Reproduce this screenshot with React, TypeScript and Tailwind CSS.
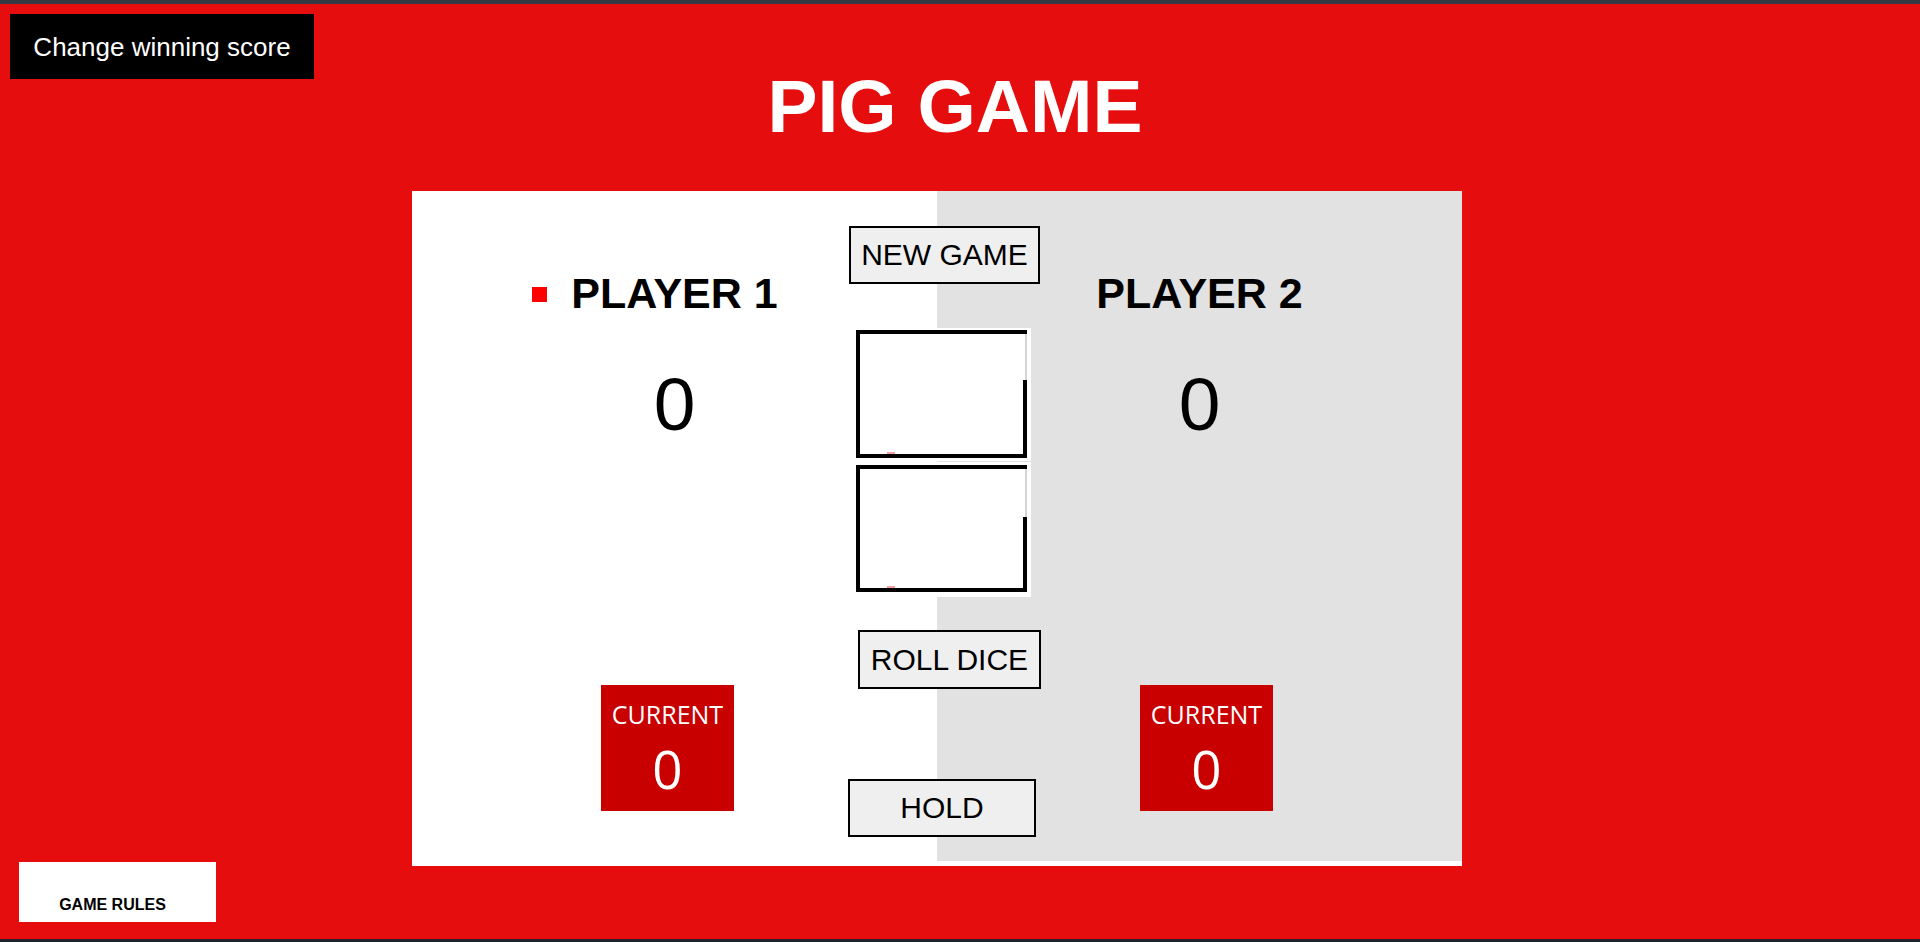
import React from 'react';

const arial = { fontFamily: '"Liberation Sans", Arial, sans-serif' };

function Dice({ second }: { second?: boolean }) {
  return (
    <div className={`absolute left-[442px] w-[177px] bg-white ${second ? 'top-[271px] h-[135px]' : 'top-[137px] h-[133px]'}`}>
      <div className={`relative ml-[2px] w-[171px] border-[4px] border-r-0 border-black ${second ? 'mt-[3px] h-[127px]' : 'mt-[2px] h-[128px]'}`}>
        <div className={`absolute right-0 top-0 w-[2px] bg-[#d4d4d4] ${second ? 'h-[48px]' : 'h-[46px]'}`} />
        <div className={`absolute right-0 bottom-0 w-[4px] bg-black ${second ? 'top-[48px]' : 'top-[46px]'}`} />
        <div className="absolute left-[27px] bottom-0 w-[8px] h-[2px] bg-[#f3a0a0]" />
      </div>
    </div>
  );
}

function PlayerPanel({ name, active, grey }: { name: string; active?: boolean; grey?: boolean }) {
  return (
    <div className={`flex flex-col items-center pt-[81px] ${grey ? 'flex-1 h-[670px] bg-[#e2e2e2]' : 'w-[525px] h-full bg-white'}`}>
      <div className="relative text-[43px] leading-none font-bold text-black" style={arial}>
        {active && <span className="absolute -left-[39px] top-[15px] w-[15px] h-[15px] bg-[#ff0000]" />}
        {name}
      </div>
      <div className="mt-[52px] text-[75px] leading-none text-black" style={arial}>0</div>
      <div
        className={`self-start mt-[243px] w-[133px] h-[126px] bg-[#c80000] text-white flex flex-col items-center pt-[17px] ${grey ? 'ml-[203px]' : 'ml-[189px]'}`}
        style={{ fontFamily: '"Open Sans", sans-serif' }}
      >
        <div className="text-[25px] leading-none">CURRENT</div>
        <div className="mt-[15px] text-[53px] leading-none">0</div>
      </div>
    </div>
  );
}

export default function App() {
  const btn = 'absolute flex items-center justify-center bg-[#efefef] border-2 border-black text-[30px] leading-none text-black';

  return (
    <div className="relative h-[942px] w-full bg-[#e50d0d] flex flex-col overflow-hidden" style={arial}>
      <div className="h-[4px] bg-[#363a45]" />

      <button className="absolute left-[10px] top-[14px] w-[304px] h-[65px] bg-black text-white text-[26px] leading-none flex items-center justify-center">
        Change winning score
      </button>

      <div className="flex-1 flex flex-col">
        <h1 className="mt-[65px] pr-[10px] text-center text-[75px] leading-none font-bold text-white">PIG GAME</h1>

        <div className="relative mt-[47px] ml-[412px] w-[1050px] h-[675px] bg-white flex">
          <PlayerPanel name="PLAYER 1" active />
          <PlayerPanel name="PLAYER 2" grey />

          <button className={`${btn} left-[437px] top-[35px] w-[191px] h-[58px]`}>NEW GAME</button>

          <Dice />
          <Dice second />

          <button className={`${btn} left-[446px] top-[439px] w-[183px] h-[59px]`}>ROLL DICE</button>
          <button className={`${btn} left-[436px] top-[588px] w-[188px] h-[58px]`}>HOLD</button>
        </div>
      </div>

      <button className="absolute left-[19px] top-[862px] w-[197px] h-[60px] bg-white pt-[26px] pr-[10px] text-center text-[16px] leading-none font-bold text-black">
        GAME RULES
      </button>

      <div className="h-[3px] bg-[#22222e]" />
    </div>
  );
}
